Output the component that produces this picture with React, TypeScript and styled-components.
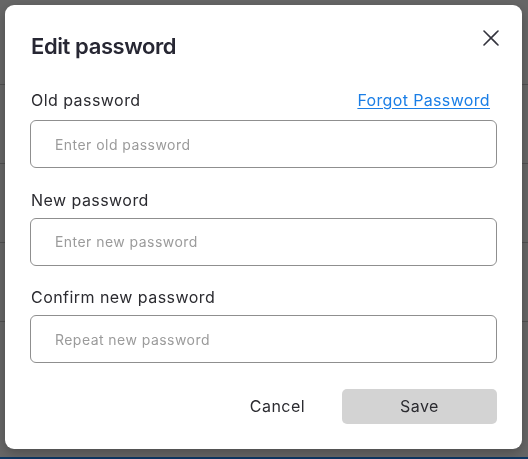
import { createGlobalStyle } from 'styled-components'
import styled from 'styled-components'

const GlobalStyle = createGlobalStyle`
  html, body {
    margin: 0;
    padding: 0;
    height: 100%;
  }
  body {
    font-family: Inter, "Noto Sans", "Liberation Sans", sans-serif;
    background: #ffffff;
    overflow: hidden;
  }
`

const Page = styled.div`
  height: 459px;
  display: flex;
  flex-direction: column;
`

const PageRows = styled.div`
  flex: 1;
  padding-top: 84px;
`

const PageRow = styled.div`
  height: 78px;
  border-top: 1px solid #c8c8c8;
`

const PageFooter = styled.div`
  height: 2px;
  background: #2088f5;
`

const Backdrop = styled.div`
  position: fixed;
  inset: 0;
  background: rgba(0, 0, 0, 0.6);
  display: flex;
  align-items: flex-start;
  justify-content: flex-start;
  padding: 5px 0 0 5px;
`

const Dialog = styled.div`
  position: relative;
  box-sizing: border-box;
  width: 517px;
  height: 444px;
  background: #ffffff;
  border-radius: 9px;
  box-shadow: 0 4px 12px rgba(0, 0, 0, 0.25);
  padding: 26px 25px 26px 25px;
  display: flex;
  flex-direction: column;
`

const Title = styled.h2`
  margin: 0 0 27px 1px;
  font-size: 22px;
  line-height: 30px;
  font-weight: 600;
  letter-spacing: -0.4px;
  color: #272733;
`

const CloseButton = styled.button`
  position: absolute;
  top: 21px;
  right: 19px;
  width: 24px;
  height: 24px;
  padding: 0;
  border: 0;
  background: transparent;
  display: flex;
  align-items: center;
  justify-content: center;
  cursor: pointer;
  color: #33333d;
`

const Field = styled.div`
  display: flex;
  flex-direction: column;
  & + & {
    margin-top: 21.5px;
  }
`

const LabelRow = styled.div`
  display: flex;
  align-items: center;
  justify-content: space-between;
  height: 24px;
  margin-bottom: 8px;
`

const Label = styled.label<{ $tall?: boolean }>`
  font-size: 16px;
  letter-spacing: 0.45px;
  line-height: ${p => (p.$tall ? '24px' : '20px')};
  color: #2b2b30;
  margin-left: 1px;
  margin-bottom: ${p => (p.$tall ? '0' : '8px')};
`

const Link = styled.a`
  font-size: 16px;
  letter-spacing: 0.35px;
  line-height: 24px;
  color: #1a7ee6;
  text-decoration: underline;
  text-underline-offset: 2px;
  margin-right: 7px;
  cursor: pointer;
`

const Input = styled.input`
  box-sizing: border-box;
  height: 48px;
  width: 100%;
  border: 1px solid #8f8f8f;
  border-radius: 6px;
  padding: 0 24px;
  font-family: inherit;
  font-size: 14px;
  letter-spacing: 0.45px;
  color: #222;
  outline: none;
  &::placeholder {
    color: #9b9b9b;
  }
`

const Actions = styled.div`
  display: flex;
  justify-content: flex-end;
  align-items: center;
  margin-top: 25px;
  gap: 21px;
`

const TextButton = styled.button`
  height: 36px;
  padding: 0 16px;
  border: 0;
  background: transparent;
  font-family: inherit;
  font-size: 16px;
  letter-spacing: 0.45px;
  color: #2b2b30;
  cursor: pointer;
`

const SaveButton = styled.button`
  width: 155px;
  height: 35px;
  border: 0;
  border-radius: 5px;
  background: #d3d3d3;
  font-family: inherit;
  font-size: 16px;
  letter-spacing: 0.45px;
  color: #2b2b30;
  cursor: pointer;
`

export default function App() {
  return (
    <>
      <GlobalStyle />
      <Page>
        <PageRows>
          {[0, 1, 2, 3].map(i => <PageRow key={i} />)}
        </PageRows>
        <PageFooter />
      </Page>
      <Backdrop>
        <Dialog>
          <Title>Edit password</Title>
          <CloseButton aria-label="Close">
            <svg width="16" height="16" viewBox="0 0 16 16" fill="none" stroke="currentColor" strokeWidth="1.6" strokeLinecap="round">
              <path d="M1 1L15 15M15 1L1 15" />
            </svg>
          </CloseButton>
          <Field>
            <LabelRow>
              <Label $tall>Old password</Label>
              <Link>Forgot Password</Link>
            </LabelRow>
            <Input type="password" placeholder="Enter old password" />
          </Field>
          <Field>
            <Label>New password</Label>
            <Input type="password" placeholder="Enter new password" />
          </Field>
          <Field>
            <Label>Confirm new password</Label>
            <Input type="password" placeholder="Repeat new password" />
          </Field>
          <Actions>
            <TextButton>Cancel</TextButton>
            <SaveButton>Save</SaveButton>
          </Actions>
        </Dialog>
      </Backdrop>
    </>
  )
}
